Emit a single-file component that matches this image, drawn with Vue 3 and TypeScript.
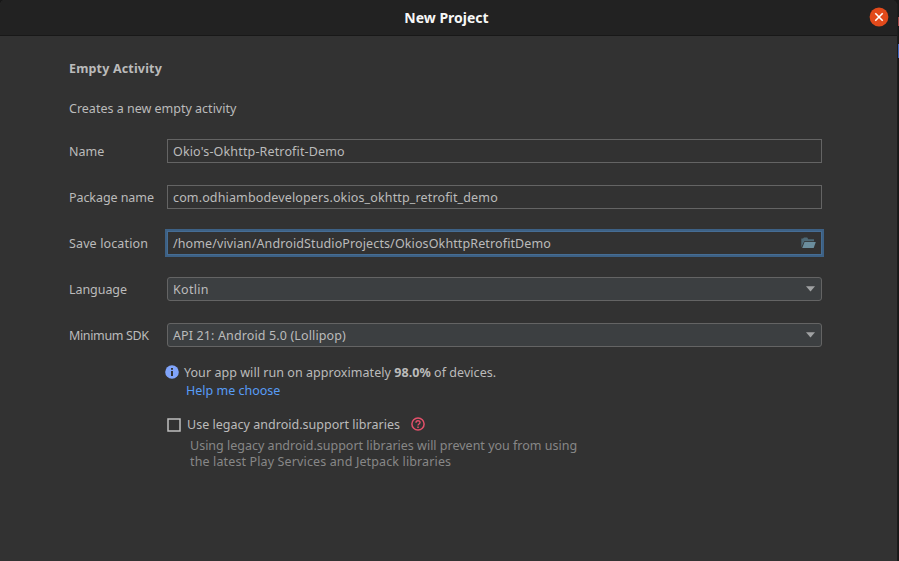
<script setup lang="ts">
import { ref } from 'vue'

interface Field {
  key: string
  label: string
  value: string
  kind: 'text' | 'path' | 'select'
}

const fields: Field[] = [
  { key: 'name', label: 'Name', value: "Okio's-Okhttp-Retrofit-Demo", kind: 'text' },
  { key: 'package', label: 'Package name', value: 'com.odhiambodevelopers.okios_okhttp_retrofit_demo', kind: 'text' },
  { key: 'location', label: 'Save location', value: '/home/vivian/AndroidStudioProjects/OkiosOkhttpRetrofitDemo', kind: 'path' },
  { key: 'language', label: 'Language', value: 'Kotlin', kind: 'select' },
  { key: 'sdk', label: 'Minimum SDK', value: 'API 21: Android 5.0 (Lollipop)', kind: 'select' },
]

const legacy = ref(false)
</script>

<template>
  <div class="screen">
    <div class="dialog">
      <header class="titlebar">
        <span class="title">New Project</span>
        <button class="close" aria-label="Close">
          <svg width="20" height="20" viewBox="0 0 20 20">
            <circle cx="10" cy="10" r="9.4" fill="#e24a1b" />
            <path d="M6.3 6.3l7.4 7.4M13.7 6.3l-7.4 7.4" stroke="#fff" stroke-width="1.6" />
          </svg>
        </button>
      </header>

      <main class="content">
        <h1 class="heading">Empty Activity</h1>
        <p class="intro">Creates a new empty activity</p>

        <div class="form">
          <div v-for="f in fields" :key="f.key" class="row">
            <span class="label" :class="'label-' + f.key">{{ f.label }}</span>
            <div class="control" :class="f.kind">
              <span class="value" :class="'value-' + f.key">{{ f.value }}</span>
              <svg v-if="f.kind === 'path'" class="folder" width="15" height="12" viewBox="0 0 15 12">
                <path d="M0.3 10.5V1.6H2L3 0.5H6.2L7.3 2.2H13V4.2H3.2Z" fill="#4e6975" />
                <path d="M3.5 5H14.8L12.7 11H1.2Z" fill="#6b8e9d" />
              </svg>
              <svg v-else-if="f.kind === 'select'" class="arrow" width="9" height="6" viewBox="0 0 9 6">
                <path d="M0 0.2H9L4.5 5.5Z" fill="#a0a2a3" />
              </svg>
            </div>
          </div>
        </div>

        <div class="info">
          <svg width="14" height="14" viewBox="0 0 14 14">
            <circle cx="7" cy="7" r="6.8" fill="#80a4fa" />
            <path d="M6 2.9h2v1.8H6zM6 6h2v5H6z" fill="#323232" />
          </svg>
          <span class="coverage">Your app will run on approximately <b>98.0%</b> of devices.</span>
        </div>
        <a class="help">Help me choose</a>

        <div class="legacy" @click="legacy = !legacy">
          <svg class="box" width="14" height="14" viewBox="0 0 14 14">
            <rect x="1" y="1" width="12" height="12" fill="none" stroke="#bebebe" stroke-width="1.5" />
            <path v-if="legacy" d="M3.5 7l2.5 3 5-6" fill="none" stroke="#bebebe" stroke-width="1.6" />
          </svg>
          <span class="legacy-label">Use legacy android.support libraries</span>
          <svg class="question" width="14" height="14" viewBox="0 0 14 14" fill="none" stroke="#e3506a">
            <circle cx="7" cy="7" r="6.1" stroke-width="1.5" />
            <path d="M5 5.7C5 3.1 9 3.1 9 5.5C9 7 7 6.9 7 8.5" stroke-width="1.4" />
            <path d="M7 9.5V11" stroke-width="1.5" />
          </svg>
        </div>
        <p class="note">
          <span class="note-first">Using legacy android.support libraries will prevent you from using</span>
          <span class="note-second">the latest Play Services and Jetpack libraries</span>
        </p>
      </main>
    </div>
    <div class="backdrop"></div>
  </div>
</template>

<style>
body {
  margin: 0;
  background: #181818;
}
</style>

<style scoped>
.screen {
  display: flex;
  width: 899px;
  height: 561px;
  overflow: hidden;
  background: #181818;
  font: 12.5px/18px 'Noto Sans', 'Open Sans', sans-serif;
  color: #bbb;
  white-space: nowrap;
}
.dialog {
  width: 898px;
  box-sizing: border-box;
  border-right: 1px solid #1c1c1c;
  border-radius: 5px 6px 0 0;
  background: #323232;
  overflow: hidden;
}
.backdrop {
  width: 1px;
  background: linear-gradient(#181818 17px, #a04848 17px 26px, #181818 26px 44px, #4169c0 44px 58px, #181818 58px);
}
.titlebar {
  display: grid;
  grid-template-columns: 1fr auto 1fr;
  align-items: center;
  height: 36px;
  box-sizing: border-box;
  border-bottom: 1px solid #181818;
  background: #222;
}
.title {
  grid-column: 2;
  margin-left: -4px;
  color: #f7f7f7;
  font-size: 14px;
  font-weight: 700;
}
.close {
  justify-self: end;
  width: 20px;
  height: 20px;
  margin: 0 8px 1px 0;
  padding: 0;
  border: 0;
  background: none;
}
svg {
  display: block;
  flex: none;
}
.content {
  padding: 24px 75px 0 69px;
}
.heading,
.intro,
.note {
  margin: 0;
  font-size: inherit;
}
.heading {
  letter-spacing: 0.17px;
}
.intro {
  margin-top: 22px;
}
.form {
  display: grid;
  gap: 22px;
  margin-top: 21px;
}
.row {
  display: grid;
  grid-template-columns: 98px 655px;
  align-items: center;
}
.label,
.value,
.coverage,
.legacy-label {
  padding-top: 2px;
}
.label-package {
  letter-spacing: -0.07px;
}
.label-location {
  letter-spacing: 0.13px;
}
.label-language {
  letter-spacing: -0.06px;
}
.label-sdk {
  letter-spacing: -0.36px;
}
.value-name {
  letter-spacing: 0.15px;
}
.value-package {
  letter-spacing: 0.14px;
}
.value-location {
  letter-spacing: 0.12px;
}
.value-language {
  letter-spacing: 0.3px;
}
.value-sdk {
  letter-spacing: 0.13px;
}
.control {
  display: flex;
  justify-content: space-between;
  align-items: center;
  height: 24px;
  box-sizing: border-box;
  padding: 0 5px;
  border: 1px solid #646464;
}
.path {
  border-color: #466d94;
  box-shadow: 0 0 0 2px #3d6185;
}
.select {
  padding-right: 6px;
  border-radius: 3px;
  background: #3c3f41;
}
.info {
  display: flex;
  align-items: center;
  gap: 5px;
  margin: 15px 0 0 96px;
}
.coverage {
  letter-spacing: 0.05px;
}
.help {
  display: block;
  width: max-content;
  margin-left: 117px;
  color: #589df6;
}
.legacy {
  display: flex;
  align-items: center;
  margin: 14px 0 0 98px;
}
.box {
  margin-top: 2px;
}
.legacy-label {
  width: 224px;
  margin-left: 6px;
  letter-spacing: 0.02px;
}
.note {
  display: grid;
  margin: 4px 0 0 121px;
  line-height: 16px;
  color: #878787;
}
.note-second {
  letter-spacing: 0.13px;
}
</style>
